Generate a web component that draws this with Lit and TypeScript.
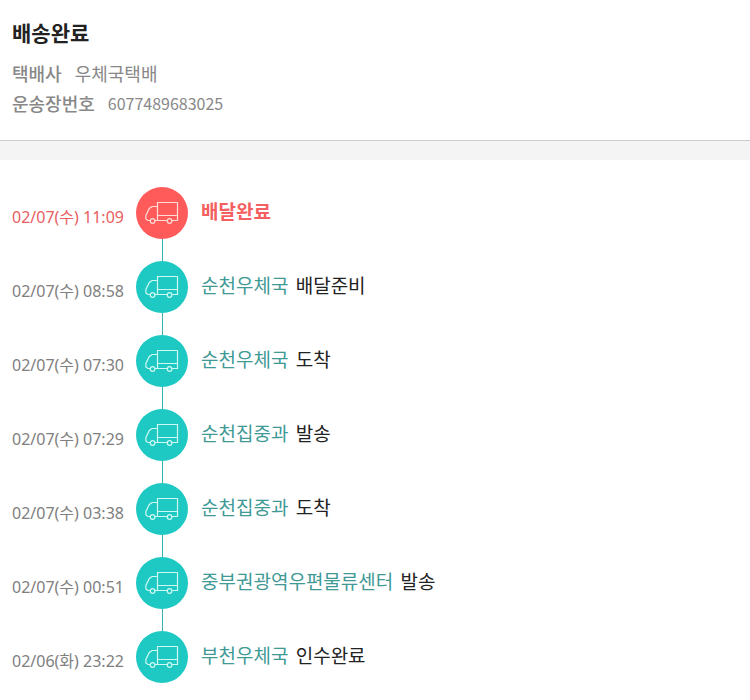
import { LitElement, html, css, svg } from "lit";
import { customElement, property } from "lit/decorators.js";
import { classMap } from "lit/directives/class-map.js";

interface TrackingEvent {
  datetime: string;
  time: string;
  place?: string;
  status: string;
  done?: boolean;
}

const EVENTS: TrackingEvent[] = [
  { datetime: "02-07T11:09", time: "02/07(수) 11:09", status: "배달완료", done: true },
  { datetime: "02-07T08:58", time: "02/07(수) 08:58", place: "순천우체국", status: "배달준비" },
  { datetime: "02-07T07:30", time: "02/07(수) 07:30", place: "순천우체국", status: "도착" },
  { datetime: "02-07T07:29", time: "02/07(수) 07:29", place: "순천집중과", status: "발송" },
  { datetime: "02-07T03:38", time: "02/07(수) 03:38", place: "순천집중과", status: "도착" },
  { datetime: "02-07T00:51", time: "02/07(수) 00:51", place: "중부권광역우편물류센터", status: "발송" },
  { datetime: "02-06T23:22", time: "02/06(화) 23:22", place: "부천우체국", status: "인수완료" },
];

const truck = svg`
  <path d="M36 33.5H41.5V15.5H21.5V33.5M19 33.5H31.2M21.5 28.5H41.5" />
  <path d="M21.5 19.5H16L13.3 21.5L9.9 28.5V32L12 33.5H14" />
  <circle cx="16.6" cy="34" r="2.3" />
  <circle cx="33.6" cy="34" r="2.3" />
`;

@customElement("tracking-step")
export class TrackingStep extends LitElement {
  @property({ attribute: false }) event!: TrackingEvent;

  static styles = css`
    :host {
      display: grid;
      grid-template-columns: 111px 52px 1fr;
      column-gap: 13px;
      align-items: start;
    }
    .time {
      padding-top: 18px;
      font-family: "Noto Sans", "Noto Sans CJK KR", sans-serif;
      font-size: 16px;
      line-height: 24px;
      color: #808080;
      white-space: nowrap;
    }
    .marker {
      display: flex;
      flex-direction: column;
      align-items: center;
    }
    .icon {
      width: 52px;
      height: 52px;
      border-radius: 50%;
      background: #1ec8c3;
    }
    .icon svg {
      display: block;
      fill: none;
      stroke: #d0f8f2;
      stroke-width: 1.2;
    }
    .line {
      width: 1px;
      height: 22px;
      background: #35b3b0;
    }
    :host(:last-of-type) .line {
      display: none;
    }
    .text {
      margin: 0;
      padding-top: 10px;
      font-size: 19px;
      line-height: 28px;
      color: #222;
    }
    .place {
      margin-right: 3px;
      color: #3f9a96;
    }
    .text.done {
      color: #f4605f;
      font-weight: 700;
    }
    .time.done {
      color: #e8605f;
    }
    .icon.done {
      background: #ff5b5b;
    }
    .icon.done svg {
      stroke: #ffdcd6;
    }
  `;

  render() {
    const { datetime, time, place, status, done = false } = this.event;
    return html`
      <time class=${classMap({ time: true, done })} datetime=${datetime}>${time}</time>
      <div class="marker">
        <div class=${classMap({ icon: true, done })}>
          <svg width="52" height="52" viewBox="0 0 52 52" aria-hidden="true">${truck}</svg>
        </div>
        <div class="line"></div>
      </div>
      <p class=${classMap({ text: true, done })}>
        ${place ? html`<span class="place">${place}</span> ` : ""}${status}
      </p>
    `;
  }
}

@customElement("app-root")
export class AppRoot extends LitElement {
  static styles = css`
    :host {
      display: block;
      min-height: 100vh;
      background: #fff;
      font-family: "Noto Sans CJK KR", sans-serif;
    }
    .summary {
      padding: 18px 12px 22px;
      border-bottom: 1px solid #ccc;
    }
    .title {
      margin: 0 0 12px;
      font-size: 21px;
      line-height: 28px;
      font-weight: 700;
      color: #222;
    }
    .info {
      margin: 0;
      font-size: 18px;
      line-height: 30px;
      color: #888;
    }
    .row {
      display: flex;
      gap: 13px;
    }
    .row dt {
      font-weight: 500;
    }
    .row dd {
      margin: 0;
    }
    .number {
      font-size: 16px;
    }
    .band {
      height: 19px;
      background: #f4f4f4;
    }
    .timeline {
      padding: 27px 12px 16px;
    }
  `;

  render() {
    return html`
      <header class="summary">
        <h1 class="title">배송완료</h1>
        <dl class="info">
          <div class="row"><dt>택배사</dt><dd>우체국택배</dd></div>
          <div class="row"><dt>운송장번호</dt><dd class="number">6077489683025</dd></div>
        </dl>
      </header>
      <div class="band"></div>
      <main class="timeline">
        ${EVENTS.map((event) => html`<tracking-step .event=${event}></tracking-step>`)}
      </main>
    `;
  }
}
